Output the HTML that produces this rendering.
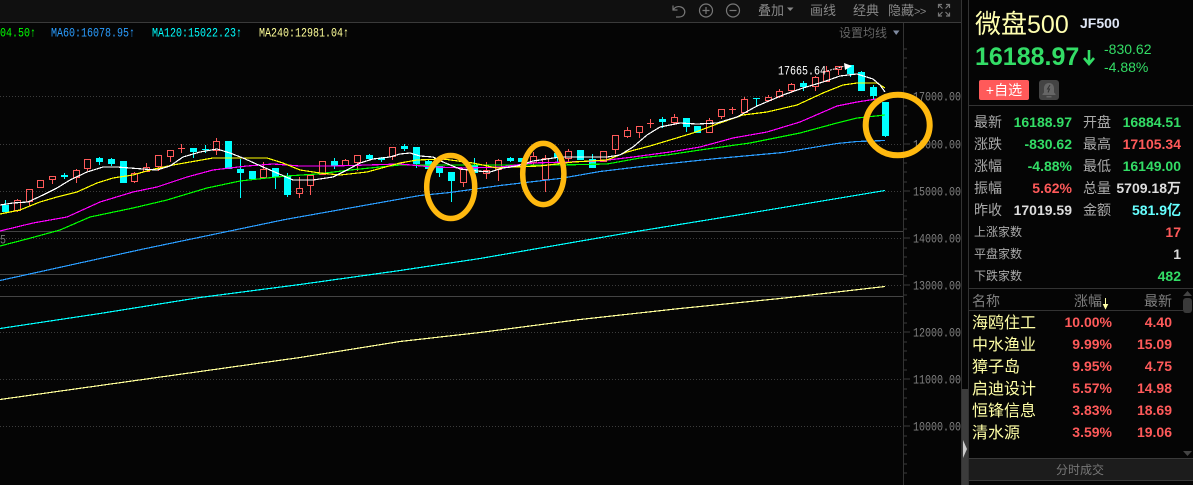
<!DOCTYPE html>
<html lang="zh"><head><meta charset="utf-8"><title>微盘500</title>
<style>
html,body{margin:0;padding:0;background:#050505}
#p{position:relative;width:1193px;height:485px;overflow:hidden;background:#050505;font-family:"Liberation Sans","WenQuanYi Zen Hei","Noto Sans CJK SC",sans-serif}
#p svg{position:absolute;left:0;top:0}
.t{position:absolute;line-height:20px;white-space:nowrap;height:20px}
.l{font-size:14px;color:#aaa}
.v{font-size:14px;font-weight:bold;text-align:right}
.s{font-size:13px;color:#aaa}
.m{font-family:"Liberation Mono",monospace;font-size:10px;letter-spacing:0;transform:scaleY(1.3);transform-origin:center}
.a{color:#808080;left:913px}
.n{font-size:16px;color:#ffffa6;left:972px}
.g{color:#33dd66}.r{color:#ff5a5a}.w{color:#ddd}.c{color:#66ffff}
.h{font-size:14px;color:#808080}
.b{font-size:13px;color:#888}
</style></head><body><div id="p">
<svg width="1193" height="485" viewBox="0 0 1193 485">
<rect x="0" y="0" width="961" height="22" fill="#101010"/>
<g shape-rendering="crispEdges" fill="none">
<path d="M0 22.5H961" stroke="#3a3a3a"/>
<path d="M0 96.5H903M0 144.5H903M0 191.5H903M0 238.5H903M0 285.5H903M0 332.5H903M0 379.5H903M0 426.5H903" stroke="#3c3c3c" stroke-dasharray="1 2"/>
<path d="M0 231.5H903M0 274.5H903M0 296.5H903" stroke="#444"/>
<path d="M903.5 23V485M961.5 0V485M968.5 0V485" stroke="#333"/>
<path d="M904 49h3M904 58h3M904 68h3M904 77h3M904 87h3M904 96h6M904 106h3M904 115h3M904 125h3M904 134h3M904 144h6M904 153h3M904 163h3M904 172h3M904 182h3M904 191h6M904 201h3M904 210h3M904 219h3M904 229h3M904 238h6M904 248h3M904 257h3M904 266h3M904 276h3M904 285h6M904 295h3M904 304h3M904 313h3M904 323h3M904 332h6M904 342h3M904 351h3M904 360h3M904 370h3M904 379h6M904 389h3M904 398h3M904 407h3M904 417h3M904 426h6M904 436h3M904 445h3M904 454h3M904 464h3M904 473h3" stroke="#3a3a3a"/>
<!-- red candles -->
<path stroke="#ff5a5a" d="M14.5 200.5h6v10h-6zM17.5 199v2M17.5 210v2
M26.5 189.5h6v12h-6zM29.5 201v5
M37.5 180.5h6v7h-6z
M49.5 176.5h6v3h-6zM52.5 179v5
M73.5 170.5h6v7h-6zM76.5 169v2M76.5 177v6
M84.5 159.5h6v9h-6zM87.5 168v3
M131.5 173.5h6v8h-6zM134.5 172v2M134.5 181v2
M143.5 167.5h6v4h-6zM146.5 163v5
M155.5 155.5h6v11h-6zM158.5 166v5
M167.5 150.5h6v6h-6zM170.5 156v6
M178 148.5h7M181.5 144v9
M213.5 141.5h6v9h-6zM216.5 138v4M216.5 150v5
M260.5 169.5h6v8h-6zM263.5 162v8
M296.5 188.5h6v5h-6zM299.5 177v12M299.5 193v5
M307.5 175.5h6v10h-6zM310.5 185v10
M319.5 161.5h6v13h-6z
M342.5 160.5h6v5h-6zM345.5 159v2M345.5 165v1
M354.5 155.5h6v7h-6zM357.5 162v9
M389.5 147.5h6v9h-6zM392.5 156v4
M460.5 169.5h6v13h-6zM463.5 182v5
M483.5 170.5h6v3h-6zM486.5 162v9M486.5 173v6
M495.5 160.5h6v9h-6zM498.5 159v2M498.5 169v12
M530.5 156.5h6v6h-6zM533.5 152v5M533.5 162v3
M542.5 158.5h6v21h-6zM545.5 155v4M545.5 179v13
M565.5 151.5h6v7h-6zM568.5 149v3M568.5 158v5
M600.5 151.5h6v10h-6z
M612.5 135.5h6v14h-6zM615.5 149v5
M624.5 130.5h6v6h-6zM627.5 127v4M627.5 136v2
M636.5 126.5h6v6h-6zM639.5 132v6
M647 123.5h7M650.5 119v9
M671.5 117.5h6v5h-6zM674.5 114v4M674.5 122v3
M706.5 120.5h6v12h-6zM709.5 118v3
M718.5 109.5h6v7h-6zM721.5 116v3
M729 109.5h7M732.5 107v7
M741.5 99.5h6v13h-6zM744.5 97v3
M765.5 97.5h6v3h-6zM768.5 95v3M768.5 100v2
M776.5 91.5h6v5h-6zM779.5 89v3M779.5 96v2
M788.5 84.5h6v6h-6zM791.5 83v2M791.5 90v3
M812.5 77.5h6v9h-6zM815.5 76v2M815.5 86v5
M823.5 71.5h6v10h-6zM826.5 66v6
M835.5 66.5h6v3h-6zM838.5 69v6"/>
<!-- cyan wicks -->
<path stroke="#00ffff" d="M5.5 200V213M64.5 173V179M99.5 157V165M111.5 158V166M193.5 152V158M202 149.5h7M205.5 145V153M240.5 159V198M252.5 179V180M275.5 177V189M287.5 173V197M334.5 158V169M369.5 154V160M381.5 157V162M404.5 144V151M416.5 164V168M428.5 159V161M439.5 173V177M451.5 181V202M474.5 158V165M510.5 157V162M557.5 158V162M592.5 154V159M662.5 117V128M686.5 127V132M756.5 99V107M753 98.5h7M803.5 81V91M850.5 74V77M861.5 71V72M873.5 85V99M885.5 136V137"/>
</g>
<!-- cyan bodies -->
<path fill="#00ffff" shape-rendering="crispEdges" d="M2 205h7v7h-7zM61 175h7v2h-7zM96 158h7v4h-7zM108 159h7v5h-7zM120 161h7v22h-7zM190 148h7v4h-7zM225 141h7v28h-7zM237 169h7v4h-7zM249 171h7v8h-7zM272 168h7v9h-7zM284 176h7v19h-7zM331 161h7v5h-7zM366 155h7v4h-7zM378 158h7v2h-7zM401 146h7v3h-7zM413 147h7v17h-7zM425 161h7v8h-7zM436 166h7v7h-7zM448 172h7v9h-7zM471 165h7v8h-7zM507 158h7v3h-7zM518 158h7v4h-7zM554 153h7v5h-7zM577 150h7v10h-7zM589 159h7v9h-7zM659 119h7v3h-7zM683 118h7v9h-7zM694 126h7v7h-7zM800 83h7v4h-7zM847 65h7v9h-7zM858 72h7v19h-7zM870 87h7v9h-7zM882 102h7v34h-7z"/>
<g fill="none" stroke-width="1.2" shape-rendering="crispEdges">
<polyline stroke="#ffff99" points="0,399.5 100,385.5 200,371.5 300,357.5 400,341.5 480,332.5 580,319.5 680,308.5 780,298.5 885,286.5"/>
<polyline stroke="#00ffff" points="0,328.5 100,313.5 200,297.5 300,284.5 400,270.5 480,258.5 630,232.5 747,213.5 885,190.5"/>
<polyline stroke="#2a9dff" points="0,280.5 141,249.5 285,219.5 420,195.5 450,192.5 500,185.5 560,178.5 600,171.5 650,165.5 717,158.5 783,152.5 837,143.5 857,141.5 885,140.5"/>
<polyline stroke="#00ff00" points="0,246 27,239 60,230 90,217 133,208 167,200 207,188 240,181 267,178 287,176 317,174 350,170 400,165 500,165 560,165 607,164 640,158 667,155 700,150 750,143 800,133 837,123 857,118 885,115"/>
<polyline stroke="#ff00ff" points="0,231 33,223 67,217 100,202 133,192 157,187 187,177 213,170 247,166 273,164 300,166 333,166 367,165 400,164 433,167 467,168 500,167 533,163 567,162 600,161 633,157 670,152 700,147 733,138 767,132 800,122 837,106 857,102 883,98"/>
<polyline stroke="#ffff00" points="0,214 20,210 40,202 57,197 77,192 97,183 113,178 133,175 150,170 173,165 190,162 213,158 233,158 267,158 283,163 300,170 320,173 340,175 367,172 400,163 417,160 443,159 473,163 497,168 513,167 540,166 573,162 607,160 627,152 650,146 670,140 693,133 717,124 743,115 767,112 797,105 823,93 843,85 857,83 877,83 885,88"/>
<polyline stroke="#ffffff" points="0,205 13,203 28,202 43,195 57,188 70,180 87,172 103,167 117,167 130,168 143,169 157,170 170,166 183,157 200,152 217,149 230,153 243,158 263,167 277,173 293,180 313,180 333,177 347,170 360,163 373,159 390,157 400,154 410,153 420,156 433,157 443,162 460,169 477,171 490,172 503,168 517,166 533,161 547,159 560,157 607,157 620,155 633,147 647,135 660,127 680,123 697,124 717,123 737,117 757,106 783,95 803,88 823,82 840,76 857,74 873,79 880,85 885,92"/>
</g>
<path d="M827 71L845 66" stroke="#fff" stroke-dasharray="2 1" fill="none"/>
<path d="M844 63L852 66L845 70z" fill="#fff"/>
<!-- toolbar icons -->
<g fill="none" stroke="#777" stroke-width="1.2">
<path d="M673 5.5v4.5h4.500M673 10c2-3 5-4 8-3c3 1 4.500 4 3.500 6.500c-.8 2.500-3 3.500-5.500 3.500h-3"/>
<circle cx="706" cy="10.500" r="6.500"/><path d="M702.500 10.500h7M706 7v7"/>
<circle cx="733" cy="10.500" r="6.500"/><path d="M729.500 10.500h7"/>
<path d="M938.500 8V4.500H942M946 4.500h3.500V8M938.500 12.500V16H942M946 16h3.500v-3.500M939 5l3.500 3.500M949 5l-3.500 3.500M939 15.500l3.500-3.500M949 15.500l-3.500-3.500"/>
</g>
<path d="M787 7.500h6.500L790.200 11z" fill="#888"/>
<path d="M893 30.500h6.500L896.200 35z" fill="#7f8aa0"/>
<ellipse cx="450.700" cy="187" rx="24" ry="31.500" fill="none" stroke="#ffb90f" stroke-width="5.500"/>
<ellipse cx="543.300" cy="174" rx="20.600" ry="30.600" fill="none" stroke="#ffb90f" stroke-width="5.500"/>
<!-- right panel -->
<g shape-rendering="crispEdges">
<rect x="962" y="389" width="6" height="96" fill="#3c3c3c"/>
<path d="M969 105.500H1193M969 288.500H1193M969 310.500H1183" stroke="#333" fill="none"/>
<rect x="969" y="458" width="224" height="23" fill="#1c1c1c"/>
<path d="M969 458.500H1193M969 480.500H1193" stroke="#3a3a3a" fill="none"/>
</g>
<path d="M963 440L967 449L963 458z" fill="#ccc"/>
<path d="M1183 296L1187.500 291L1192 296z" fill="#444"/>
<rect x="1183" y="298" width="9" height="15" rx="3" fill="#3a3a3a"/>
<path d="M1183 451L1187.500 456L1192 451z" fill="#444"/>
<rect x="979" y="80" width="50" height="20" rx="2" fill="#ff5a5a"/>
<rect x="1039" y="80" width="20" height="20" rx="3" fill="#444"/>
<path d="M1049 83c-3.500 0-5 2.500-5 5.500v4l-1.500 1.500v1h13v-1l-1.500-1.500v-4c0-3-1.500-5.500-5-5.500z" fill="#666"/>
<rect x="1046.500" y="96" width="5" height="1.500" fill="#666"/>
<path d="M1050 85l-2.500 4h2l-1.500 3.500" stroke="#333" fill="none"/>
<path d="M1089 50v13M1084 58l5 6l5-6" fill="none" stroke="#33dd66" stroke-width="2.600"/>
<path d="M1105.500 298v10M1103.500 304.500l2 4l2-4z" stroke="#ffffa6" fill="#ffffa6"/>
</svg>

<span class="t b" style="left:758px;top:1px">叠加</span>
<span class="t b" style="left:810px;top:1px">画线</span>
<span class="t b" style="left:853px;top:1px">经典</span>
<span class="t b" style="left:888px;top:1px">隐藏<span style="font-size:11px;letter-spacing:-.6px">&gt;&gt;</span></span>
<span class="t" style="left:839px;top:23px;font-size:12px;color:#666">设置均线</span>

<span class="t m" style="left:0;top:25px;color:#00ff00">04.50↑</span>
<span class="t m" style="left:51px;top:25px;color:#2a9dff">MA60:16078.95↑</span>
<span class="t m" style="left:152px;top:25px;color:#00ffff">MA120:15022.23↑</span>
<span class="t m" style="left:259px;top:25px;color:#ffff99">MA240:12981.04↑</span>
<span class="t m" style="left:778px;top:63px;color:#fff">17665.64</span>
<span class="t m" style="left:0;top:232px;color:#777">5</span>

<span class="t m a" style="top:89px">17000.00</span>
<span class="t m a" style="top:137px">16000.00</span>
<span class="t m a" style="top:184px">15000.00</span>
<span class="t m a" style="top:231px">14000.00</span>
<span class="t m a" style="top:278px">13000.00</span>
<span class="t m a" style="top:325px">12000.00</span>
<span class="t m a" style="top:372px">11000.00</span>
<span class="t m a" style="top:419px">10000.00</span>

<svg width="1193" height="485" viewBox="0 0 1193 485" style="pointer-events:none"><ellipse cx="897.700" cy="125" rx="32" ry="30.300" fill="none" stroke="#ffb90f" stroke-width="6"/></svg>

<span class="t" style="left:975px;top:12px;line-height:24px;height:24px;font-size:26px;color:#ffffb0">微盘<span style="font-size:25px">500</span></span>
<span class="t" style="left:1080px;top:13px;font-size:14px;font-weight:bold;color:#dfe6f5">JF500</span>
<span class="t g" style="left:975px;top:47px;font-size:25px;font-weight:bold">16188.97</span>
<span class="t g" style="left:1104px;top:39px;font-size:14px">-830.62</span>
<span class="t g" style="left:1104px;top:57px;font-size:14px">-4.88%</span>
<span class="t" style="left:979px;top:80px;width:50px;text-align:center;font-size:14px;color:#fff">+自选</span>

<span class="t l" style="left:974px;top:112px">最新</span><span class="t v g" style="right:121px;top:112px">16188.97</span>
<span class="t l" style="left:1083px;top:112px">开盘</span><span class="t v g" style="right:12px;top:112px">16884.51</span>
<span class="t l" style="left:974px;top:134px">涨跌</span><span class="t v g" style="right:121px;top:134px">-830.62</span>
<span class="t l" style="left:1083px;top:134px">最高</span><span class="t v r" style="right:12px;top:134px">17105.34</span>
<span class="t l" style="left:974px;top:156px">涨幅</span><span class="t v g" style="right:121px;top:156px">-4.88%</span>
<span class="t l" style="left:1083px;top:156px">最低</span><span class="t v g" style="right:12px;top:156px">16149.00</span>
<span class="t l" style="left:974px;top:178px">振幅</span><span class="t v r" style="right:121px;top:178px">5.62%</span>
<span class="t l" style="left:1083px;top:178px">总量</span><span class="t v w" style="right:12px;top:178px">5709.18万</span>
<span class="t l" style="left:974px;top:200px">昨收</span><span class="t v w" style="right:121px;top:200px">17019.59</span>
<span class="t l" style="left:1083px;top:200px">金额</span><span class="t v c" style="right:12px;top:200px">581.9亿</span>
<span class="t s" style="left:974px;top:222px;font-size:12px">上涨家数</span><span class="t v r" style="right:12px;top:222px">17</span>
<span class="t s" style="left:974px;top:244px;font-size:12px">平盘家数</span><span class="t v w" style="right:12px;top:244px">1</span>
<span class="t s" style="left:974px;top:266px;font-size:12px">下跌家数</span><span class="t v g" style="right:12px;top:266px">482</span>

<span class="t h" style="left:972px;top:291px">名称</span>
<span class="t h" style="left:1074px;top:291px">涨幅</span>
<span class="t h" style="left:1144px;top:291px">最新</span>

<span class="t n" style="top:314px">海鸥住工</span><span class="t v r" style="right:81px;top:312px">10.00%</span><span class="t v r" style="right:21px;top:312px">4.40</span>
<span class="t n" style="top:336px">中水渔业</span><span class="t v r" style="right:81px;top:334px">9.99%</span><span class="t v r" style="right:21px;top:334px">15.09</span>
<span class="t n" style="top:358px">獐子岛</span><span class="t v r" style="right:81px;top:356px">9.95%</span><span class="t v r" style="right:21px;top:356px">4.75</span>
<span class="t n" style="top:380px">启迪设计</span><span class="t v r" style="right:81px;top:378px">5.57%</span><span class="t v r" style="right:21px;top:378px">14.98</span>
<span class="t n" style="top:402px">恒锋信息</span><span class="t v r" style="right:81px;top:400px">3.83%</span><span class="t v r" style="right:21px;top:400px">18.69</span>
<span class="t n" style="top:424px">清水源</span><span class="t v r" style="right:81px;top:422px">3.59%</span><span class="t v r" style="right:21px;top:422px">19.06</span>

<span class="t" style="left:1056px;top:460px;font-size:12px;color:#777">分时成交</span>
</div></body></html>
